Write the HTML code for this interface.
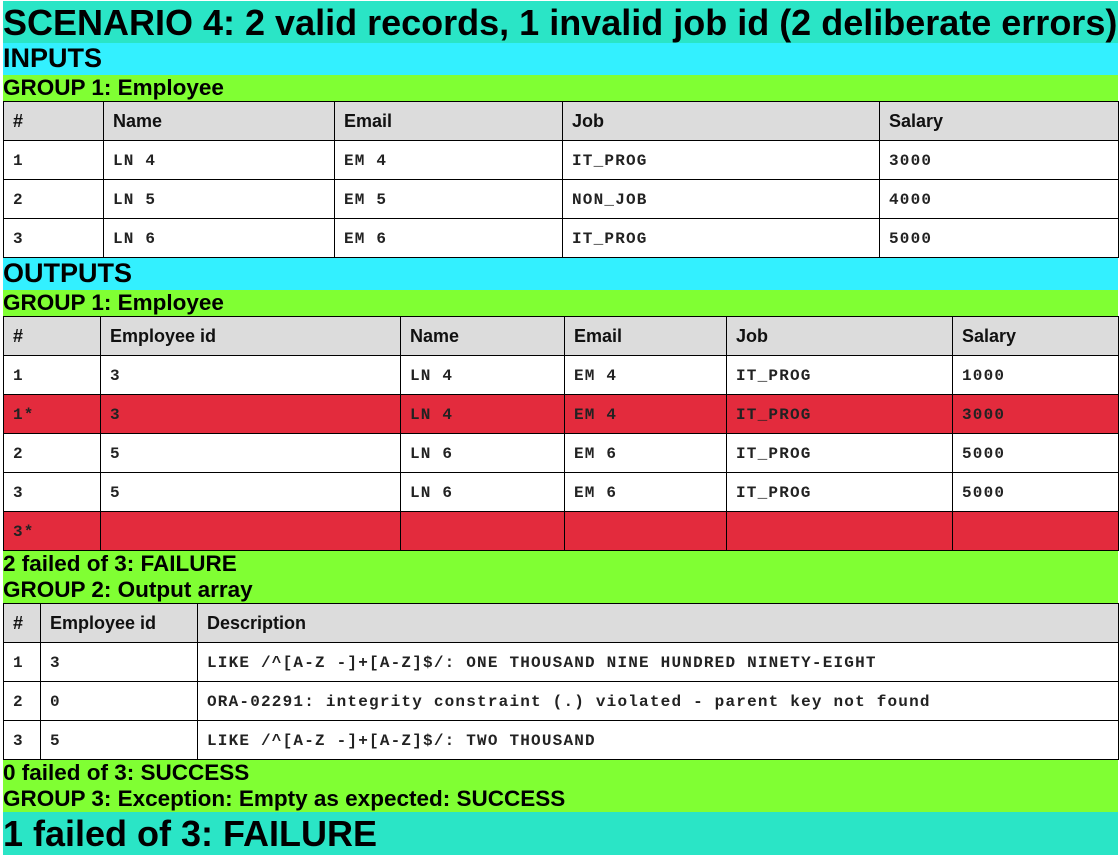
<!DOCTYPE html>
<html><head><style>
body{margin:0;padding:0 1px 0 3px;font-family:"Liberation Sans",sans-serif;background:#fff;width:1115px;overflow:hidden}
.t{background:#2ae5c6;font-size:36px;font-weight:bold;height:42px;line-height:43px;margin-top:1px;white-space:nowrap;overflow:hidden}
.h{background:#33f0ff;font-size:27px;font-weight:bold;height:32px;line-height:30px}
.g{background:#80ff33;font-size:22.5px;font-weight:bold;height:26px;line-height:25px;white-space:nowrap}
table{border-collapse:collapse;width:1116px;table-layout:fixed}
td,th{border:1px solid #000;height:38px;padding:0 0 0 9px;text-align:left;font-size:16px;letter-spacing:1.2px;font-family:"Liberation Mono",monospace;font-weight:bold;color:#222;white-space:nowrap}
td{padding-top:2px;height:36px}
th{background:#dcdcdc;font-family:"Liberation Sans",sans-serif;font-size:18px;letter-spacing:0;height:38px;color:#111}
tr.r td{background:#e32b3d}
</style></head><body>
<div class="t">SCENARIO 4: 2 valid records, 1 invalid job id (2 deliberate errors)</div>
<div class="h">INPUTS</div>
<div class="g">GROUP 1: Employee</div>
<table><colgroup><col style="width:100px"><col style="width:231px"><col style="width:228px"><col style="width:317px"><col></colgroup>
<tr><th>#</th><th>Name</th><th>Email</th><th>Job</th><th>Salary</th></tr>
<tr><td>1</td><td>LN 4</td><td>EM 4</td><td>IT_PROG</td><td>3000</td></tr>
<tr><td>2</td><td>LN 5</td><td>EM 5</td><td>NON_JOB</td><td>4000</td></tr>
<tr><td>3</td><td>LN 6</td><td>EM 6</td><td>IT_PROG</td><td>5000</td></tr>
</table>
<div class="h">OUTPUTS</div>
<div class="g">GROUP 1: Employee</div>
<table><colgroup><col style="width:97px"><col style="width:300px"><col style="width:164px"><col style="width:162px"><col style="width:226px"><col></colgroup>
<tr><th>#</th><th>Employee id</th><th>Name</th><th>Email</th><th>Job</th><th>Salary</th></tr>
<tr><td>1</td><td>3</td><td>LN 4</td><td>EM 4</td><td>IT_PROG</td><td>1000</td></tr>
<tr class="r"><td>1*</td><td>3</td><td>LN 4</td><td>EM 4</td><td>IT_PROG</td><td>3000</td></tr>
<tr><td>2</td><td>5</td><td>LN 6</td><td>EM 6</td><td>IT_PROG</td><td>5000</td></tr>
<tr><td>3</td><td>5</td><td>LN 6</td><td>EM 6</td><td>IT_PROG</td><td>5000</td></tr>
<tr class="r"><td>3*</td><td></td><td></td><td></td><td></td><td></td></tr>
</table>
<div class="g">2 failed of 3: FAILURE</div>
<div class="g">GROUP 2: Output array</div>
<table><colgroup><col style="width:37px"><col style="width:157px"><col></colgroup>
<tr><th>#</th><th>Employee id</th><th>Description</th></tr>
<tr><td>1</td><td>3</td><td>LIKE /^[A-Z -]+[A-Z]$/: ONE THOUSAND NINE HUNDRED NINETY-EIGHT</td></tr>
<tr><td>2</td><td>0</td><td>ORA-02291: integrity constraint (.) violated - parent key not found</td></tr>
<tr><td>3</td><td>5</td><td>LIKE /^[A-Z -]+[A-Z]$/: TWO THOUSAND</td></tr>
</table>
<div class="g">0 failed of 3: SUCCESS</div>
<div class="g">GROUP 3: Exception: Empty as expected: SUCCESS</div>
<div class="t" style="margin-top:0;height:43px">1 failed of 3: FAILURE</div>
</body></html>
